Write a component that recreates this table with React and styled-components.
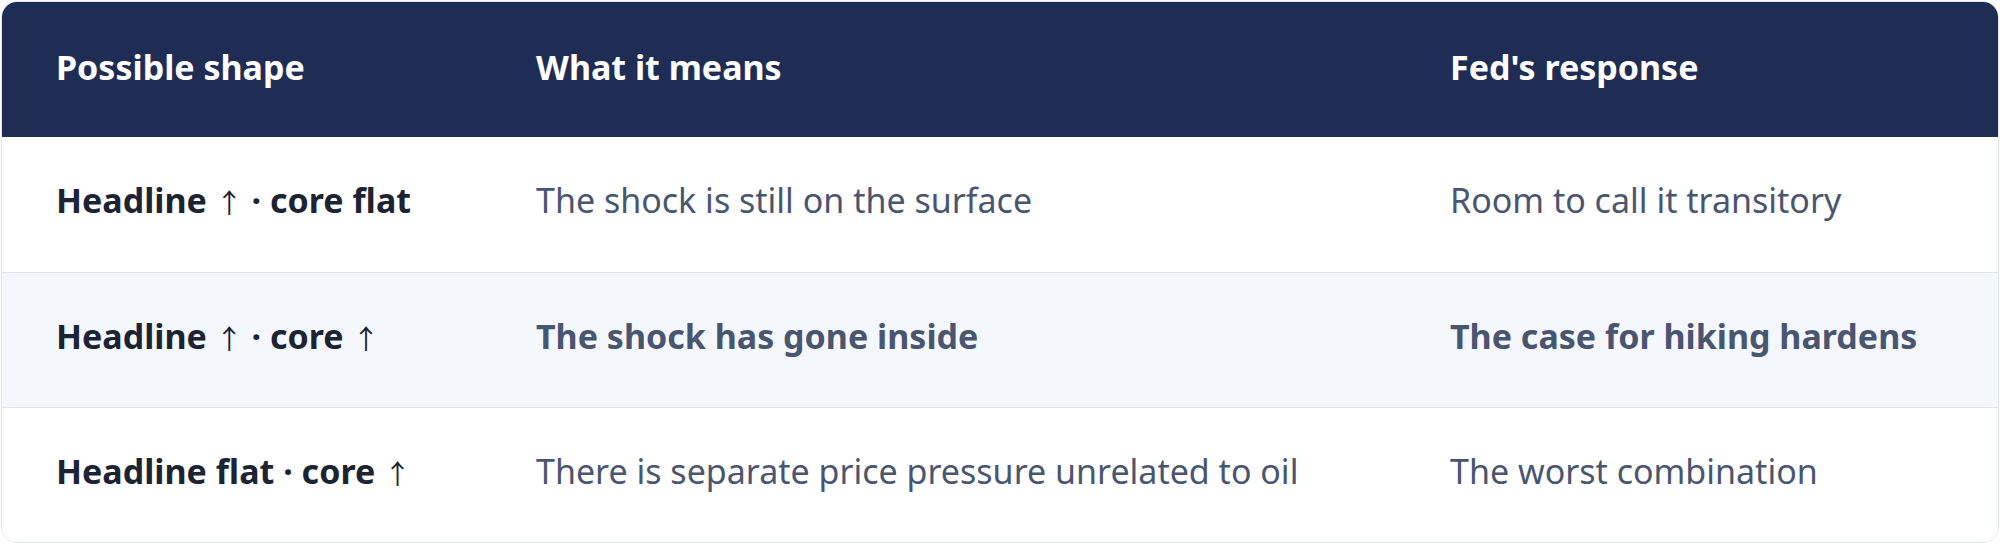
import React from 'react'
import styled, { createGlobalStyle } from 'styled-components'

const GlobalStyle = createGlobalStyle`
  html, body {
    margin: 0;
    padding: 0;
    background: #ffffff;
  }
  body {
    font-family: "Noto Sans", "Open Sans", sans-serif;
    -webkit-font-smoothing: antialiased;
  }
`

const Page = styled.div`
  padding: 1px;
`

const Table = styled.div`
  border: 1px solid #dde3ef;
  border-radius: 16px;
  overflow: hidden;
  background: #ffffff;
`

const Row = styled.div`
  display: grid;
  grid-template-columns: 480px 914px 1fr;
  align-items: center;
  height: 135px;
  box-sizing: border-box;
  background: ${props => (props.$head ? '#1f2d54' : props.$shaded ? '#f4f7fc' : '#ffffff')};
  border-top: ${props => (props.$divider ? '1px solid #dde4f0' : 'none')};
`

const HeadCell = styled.div`
  padding-left: 54px;
  padding-bottom: 6px;
  color: #ffffff;
  font-size: 34px;
  font-weight: 700;
`

const Cell = styled.div`
  padding-left: 54px;
  padding-bottom: 9px;
  font-size: 34px;
  color: ${props => (props.$lead ? '#1c2333' : '#4a5570')};
  font-weight: ${props => (props.$lead || props.$strong ? 700 : 400)};
`

const Arrow = styled.span`
  font-family: "Noto Sans CJK KR", "DejaVu Sans", sans-serif;
  font-size: 27px;
  font-weight: 400;
`

const Shape = ({ text }) =>
  text.split('↑').map((part, i, all) => (
    <React.Fragment key={i}>
      {part}
      {i < all.length - 1 && <Arrow>↑</Arrow>}
    </React.Fragment>
  ))

const rows = [
  { shape: 'Headline ↑ · core flat', means: 'The shock is still on the surface', fed: 'Room to call it transitory' },
  { shape: 'Headline ↑ · core ↑', means: 'The shock has gone inside', fed: 'The case for hiking hardens', strong: true },
  { shape: 'Headline flat · core ↑', means: 'There is separate price pressure unrelated to oil', fed: 'The worst combination' },
]

export default function App() {
  return (
    <>
      <GlobalStyle />
      <Page>
        <Table>
          <Row $head>
            <HeadCell>Possible shape</HeadCell>
            <HeadCell>What it means</HeadCell>
            <HeadCell>Fed's response</HeadCell>
          </Row>
          {rows.map((r, i) => (
            <Row key={r.shape} $shaded={r.strong} $divider={i > 0}>
              <Cell $lead><Shape text={r.shape} /></Cell>
              <Cell $strong={r.strong}>{r.means}</Cell>
              <Cell $strong={r.strong}>{r.fed}</Cell>
            </Row>
          ))}
        </Table>
      </Page>
    </>
  )
}
